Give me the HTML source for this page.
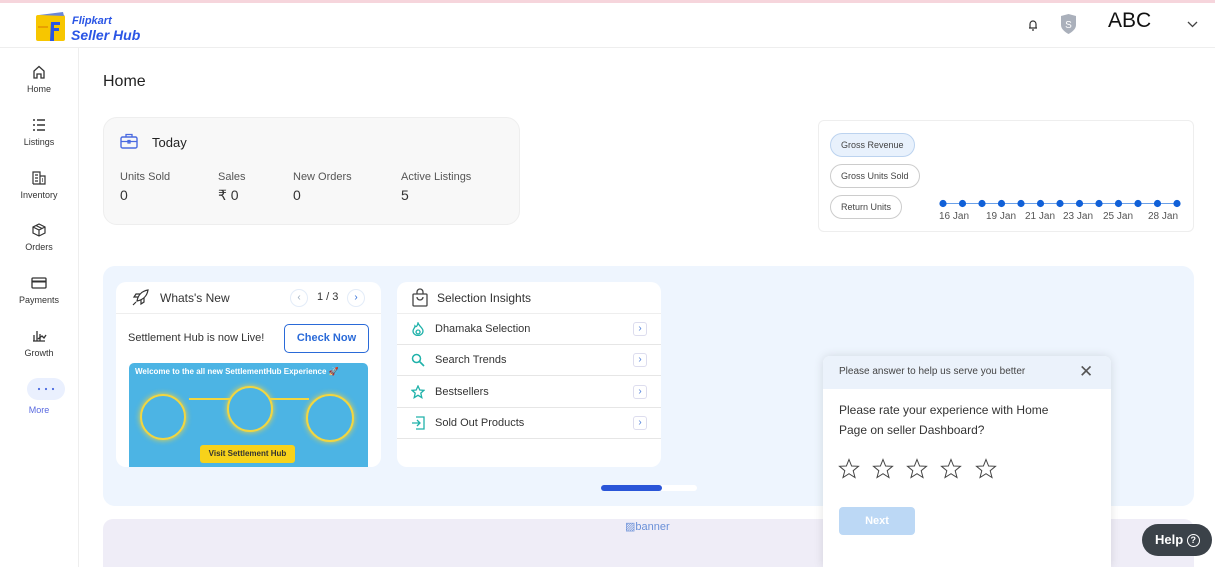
<!DOCTYPE html>
<html><head><meta charset="utf-8"><style>
*{box-sizing:border-box;margin:0;padding:0}
body{width:1215px;height:567px;overflow:hidden;background:#fff;font-family:"Liberation Sans",Arial,sans-serif;color:#333;position:relative}
.a{position:absolute}
.nav{position:absolute;left:0;width:78px;text-align:center;font-size:9px;color:#333}
.nav svg{display:block;margin:0 auto 5px}
.chip{position:absolute;left:830px;height:24px;border:1px solid #ccc;border-radius:12px;font-size:9px;color:#444;padding:0 10px;line-height:22px;background:#fff}
.row{position:absolute;left:397px;width:264px;height:31px;border-bottom:1px solid #e6e6e6;font-size:11px;color:#333}
.row span{position:absolute;left:38px;top:9px}
.row .arr{position:absolute;left:236px;top:8px;width:14px;height:14px;border:1px solid #dde;border-radius:3px;color:#4a7bd8;font-size:10px;line-height:12px;text-align:center}
.row svg{position:absolute;left:14px;top:8px}
.star{position:absolute;top:458px}
</style></head><body>
<div class="a" style="left:0;top:0;width:1215px;height:3px;background:#f6d5dc"></div>
<div class="a" style="left:0;top:47px;width:1215px;height:1px;background:#eee"></div>
<div class="a" style="left:78px;top:48px;width:1px;height:519px;background:#eee"></div>
<svg class="a" style="left:35px;top:10px" width="32" height="32" viewBox="0 0 32 32"><rect x="1" y="5" width="29" height="26" rx="2" fill="#f7c600"/><path d="M4 5 L28 2 L29 6 Z" fill="#6a86d8"/><path d="M16 12 h9 v3 h-6 v3 h5 v3 h-5 v10 h-4 z" fill="#2a55e5"/><path d="M3 17 h10" stroke="#e8a000" stroke-width="2"/></svg>
<div class="a" style="left:72px;top:15px;font-size:11px;font-style:italic;font-weight:bold;color:#2a55e5">Flipkart</div>
<div class="a" style="left:71px;top:27px;font-size:14px;font-style:italic;font-weight:bold;color:#2a55e5">Seller Hub</div>
<svg class="a" style="left:1027px;top:18px" width="12" height="14" viewBox="0 0 12 14"><path d="M3 10 V6 a3 3 0 0 1 6 0 V10 H10 H2 Z M5 12 h2" fill="none" stroke="#333" stroke-width="1.2"/></svg>
<svg class="a" style="left:1060px;top:14px" width="17" height="20" viewBox="0 0 17 20"><path d="M1 2 L8.5 0 L16 2 V11 C16 15 12 18 8.5 20 C5 18 1 15 1 11 Z" fill="#aab0bb"/><text x="8.5" y="14" font-size="10" fill="#fff" text-anchor="middle" font-family="Liberation Sans">S</text></svg>
<div class="a" style="left:1108px;top:9px;font-size:21px;color:#111">ABC</div>
<svg class="a" style="left:1187px;top:21px" width="11" height="7" viewBox="0 0 11 7"><path d="M1 1 L5.5 5.5 L10 1" fill="none" stroke="#444" stroke-width="1.3"/></svg>
<div class="nav" style="top:65px"><svg width="14" height="14" viewBox="0 0 14 14"><path d="M2 13 V6 L7 1.5 L12 6 V13 H9 V9 H5 V13 Z" fill="none" stroke="#333" stroke-width="1.3"/></svg>Home</div>
<div class="nav" style="top:118px"><svg width="14" height="14" viewBox="0 0 14 14"><path d="M1 2h2M1 7h2M1 12h2M5 2h8M5 7h8M5 12h8" stroke="#333" stroke-width="1.5"/></svg>Listings</div>
<div class="nav" style="top:171px"><svg width="14" height="14" viewBox="0 0 14 14"><path d="M1 13V1h7v12M8 5h5v8H1M3 4h3M3 7h3M3 10h3M10 8h1M10 10h1" fill="none" stroke="#333" stroke-width="1.2"/></svg>Inventory</div>
<div class="nav" style="top:223px"><svg width="14" height="14" viewBox="0 0 14 14"><path d="M7 1 L13 4 V10 L7 13 L1 10 V4 Z M1 4 L7 7 L13 4 M7 7 V13 M4 2.5 L10 5.5" fill="none" stroke="#333" stroke-width="1.2"/></svg>Orders</div>
<div class="nav" style="top:276px"><svg width="16" height="14" viewBox="0 0 16 14"><rect x="1" y="2" width="14" height="10" rx="1" fill="none" stroke="#333" stroke-width="1.3"/><path d="M1 5.5h14" stroke="#333" stroke-width="2"/></svg>Payments</div>
<div class="nav" style="top:329px"><svg width="16" height="14" viewBox="0 0 16 14"><path d="M3 12V6M6 12V2M9 12V5M2 12h12M7 10 L11 7 L13 9 L15 6" fill="none" stroke="#333" stroke-width="1.3"/></svg>Growth</div>
<div class="a" style="left:27px;top:378px;width:38px;height:22px;border-radius:11px;background:#eaf0fe"></div>
<svg class="a" style="left:37px;top:387px" width="18" height="4"><g fill="#4a6ae0"><circle cx="2" cy="2" r="1.1"/><circle cx="9" cy="2" r="1.1"/><circle cx="16" cy="2" r="1.1"/></g></svg>
<div class="nav" style="top:405px;color:#5a6ae0">More</div>
<div class="a" style="left:103px;top:73px;font-size:16px;color:#222">Home</div>
<div class="a" style="left:103px;top:117px;width:417px;height:108px;background:#f8f8f8;border:1px solid #eee;border-radius:14px"></div>
<svg class="a" style="left:120px;top:133px" width="18" height="16" viewBox="0 0 18 16"><rect x="1" y="4" width="16" height="11" rx="1.5" fill="none" stroke="#4a6ae0" stroke-width="1.4"/><path d="M6 4V1.5h6V4M1 8.5h16M8 7.5h2v2.5h-2z" fill="none" stroke="#4a6ae0" stroke-width="1.3"/></svg>
<div class="a" style="left:152px;top:135px;font-size:13px;color:#222">Today</div>
<div class="a" style="left:120px;top:171px;font-size:11px;color:#555">Units Sold</div>
<div class="a" style="left:218px;top:171px;font-size:11px;color:#555">Sales</div>
<div class="a" style="left:293px;top:171px;font-size:11px;color:#555">New Orders</div>
<div class="a" style="left:401px;top:171px;font-size:11px;color:#555">Active Listings</div>
<div class="a" style="left:120px;top:187px;font-size:14px;color:#333">0</div>
<div class="a" style="left:218px;top:187px;font-size:14px;color:#333">₹ 0</div>
<div class="a" style="left:293px;top:187px;font-size:14px;color:#333">0</div>
<div class="a" style="left:401px;top:187px;font-size:14px;color:#333">5</div>
<div class="a" style="left:818px;top:120px;width:376px;height:112px;border:1px solid #eee;border-radius:6px"></div>
<div class="chip" style="top:133px;background:#e8f1fc;border-color:#bcd3ef">Gross Revenue</div>
<div class="chip" style="top:164px">Gross Units Sold</div>
<div class="chip" style="top:195px">Return Units</div>
<div class="a" style="left:943px;top:203px;width:235px;height:1px;background:#6aa0e8"></div>
<svg class="a" style="left:938px;top:198px" width="245" height="11"><g fill="#1060d8">
<circle cx="5" cy="5.5" r="3.6"/><circle cx="24.5" cy="5.5" r="3.6"/><circle cx="44" cy="5.5" r="3.6"/><circle cx="63.5" cy="5.5" r="3.6"/><circle cx="83" cy="5.5" r="3.6"/><circle cx="102.5" cy="5.5" r="3.6"/><circle cx="122" cy="5.5" r="3.6"/><circle cx="141.5" cy="5.5" r="3.6"/><circle cx="161" cy="5.5" r="3.6"/><circle cx="180.5" cy="5.5" r="3.6"/><circle cx="200" cy="5.5" r="3.6"/><circle cx="219.5" cy="5.5" r="3.6"/><circle cx="239" cy="5.5" r="3.6"/></g></svg>
<div class="a" style="left:939px;top:211px;font-size:10px;color:#555">16 Jan</div>
<div class="a" style="left:986px;top:211px;font-size:10px;color:#555">19 Jan</div>
<div class="a" style="left:1025px;top:211px;font-size:10px;color:#555">21 Jan</div>
<div class="a" style="left:1063px;top:211px;font-size:10px;color:#555">23 Jan</div>
<div class="a" style="left:1103px;top:211px;font-size:10px;color:#555">25 Jan</div>
<div class="a" style="left:1148px;top:211px;font-size:10px;color:#555">28 Jan</div>
<div class="a" style="left:103px;top:266px;width:1091px;height:240px;background:#eef5fe;border-radius:12px"></div>
<div class="a" style="left:116px;top:282px;width:265px;height:185px;background:#fff;border-radius:10px;overflow:hidden">
 <div class="a" style="left:0;top:31px;width:265px;height:1px;background:#eee"></div>
</div>
<svg class="a" style="left:132px;top:289px" width="18" height="17" viewBox="0 0 18 17"><path d="M5 12 C6 6 10 2 16 1 C15 7 11 11 5 12 Z M6 8 L2 8 L4 5 L8 5 M9 11 L9 15 L12 13 L12 9 M4 13 L1 16" fill="none" stroke="#333" stroke-width="1.2"/></svg>
<div class="a" style="left:160px;top:291px;font-size:12px;color:#333">Whats's New</div>
<div class="a" style="left:290px;top:289px;width:18px;height:18px;border:1px solid #e3ecf8;border-radius:9px;text-align:center;font-size:10px;line-height:16px;color:#9ab">‹</div>
<div class="a" style="left:317px;top:291px;font-size:11px;color:#333">1 / 3</div>
<div class="a" style="left:347px;top:289px;width:18px;height:18px;border:1px solid #e3ecf8;border-radius:9px;text-align:center;font-size:10px;line-height:16px;color:#2a6ad8">›</div>
<div class="a" style="left:128px;top:332px;font-size:11px;color:#333">Settlement Hub is now Live!</div>
<div class="a" style="left:284px;top:324px;width:85px;height:29px;border:1.5px solid #2a6ad8;border-radius:5px;color:#2a6ad8;font-size:11px;font-weight:bold;text-align:center;line-height:26px">Check Now</div>
<div class="a" style="left:129px;top:363px;width:239px;height:104px;background:#4cb4e4;border-radius:5px 5px 0 0;overflow:hidden">
 <div class="a" style="left:6px;top:4px;font-size:8px;font-weight:bold;color:#fff;white-space:nowrap">Welcome to the all new SettlementHub Experience 🚀</div>
 <div class="a" style="left:60px;top:35px;width:120px;height:2px;background:#f2d640"></div>
 <div class="a" style="left:11px;top:31px;width:46px;height:46px;border:2px solid #f2d640;border-radius:50%;box-shadow:0 0 6px #f2d640"></div>
 <div class="a" style="left:98px;top:23px;width:46px;height:46px;border:2px solid #f2d640;border-radius:50%;background:#4cb4e4;box-shadow:0 0 6px #f2d640"></div>
 <div class="a" style="left:177px;top:31px;width:48px;height:48px;border:2px solid #f2d640;border-radius:50%;background:#4cb4e4;box-shadow:0 0 6px #f2d640"></div>
 <div class="a" style="left:71px;top:82px;width:95px;height:18px;background:#f7d21a;border-radius:3px;font-size:8px;font-weight:bold;color:#333;text-align:center;line-height:18px">Visit Settlement Hub</div>
</div>
<div class="a" style="left:397px;top:282px;width:264px;height:185px;background:#fff;border-radius:10px"></div>
<svg class="a" style="left:411px;top:288px" width="18" height="19" viewBox="0 0 18 19"><rect x="2" y="6" width="14" height="12" rx="1" fill="none" stroke="#444" stroke-width="1.3"/><path d="M6 6 V4 a3 3 0 0 1 6 0 V6 M6 9 a3 3 0 0 0 6 0" fill="none" stroke="#444" stroke-width="1.3"/></svg>
<div class="a" style="left:437px;top:291px;font-size:12px;color:#333">Selection Insights</div>
<div class="a" style="left:397px;top:313px;width:264px;height:1px;background:#eee"></div>
<div class="row" style="top:314px"><svg width="14" height="14" viewBox="0 0 14 14"><path d="M7 1 C8 4 12 6 12 9 a5 4.5 0 0 1 -10 0 C2 7 4 6 4 4 C5 5 6 5 7 1Z M7 8 a2 2 0 1 0 0.1 0" fill="none" stroke="#20b2aa" stroke-width="1.3"/></svg><span>Dhamaka Selection</span><div class="arr">›</div></div>
<div class="row" style="top:345px"><svg width="14" height="14" viewBox="0 0 14 14"><circle cx="5.5" cy="5.5" r="4" fill="none" stroke="#20b2aa" stroke-width="1.5"/><path d="M8.5 8.5 L13 13" stroke="#20b2aa" stroke-width="1.6"/></svg><span>Search Trends</span><div class="arr">›</div></div>
<div class="row" style="top:377px"><svg width="14" height="14" viewBox="0 0 14 14"><path d="M7 1 L8.8 5 L13 5.3 L9.8 8.1 L10.8 12.6 L7 10.3 L3.2 12.6 L4.2 8.1 L1 5.3 L5.2 5 Z" fill="none" stroke="#20b2aa" stroke-width="1.3"/></svg><span>Bestsellers</span><div class="arr">›</div></div>
<div class="row" style="top:408px"><svg width="14" height="14" viewBox="0 0 14 14"><path d="M5 1 H13 V13 H5 M1 7 H9 M6 4 L9 7 L6 10" fill="none" stroke="#20b2aa" stroke-width="1.3"/></svg><span>Sold Out Products</span><div class="arr">›</div></div>
<div class="a" style="left:601px;top:485px;width:96px;height:6px;border-radius:3px;background:#fff"></div>
<div class="a" style="left:601px;top:485px;width:61px;height:6px;border-radius:3px;background:#2a55d8"></div>
<div class="a" style="left:103px;top:519px;width:1091px;height:48px;background:#efedf7;border-radius:10px 10px 0 0"></div>
<div class="a" style="left:625px;top:520px;font-size:11px;color:#6a90d8">▨banner</div>
<div class="a" style="left:823px;top:356px;width:288px;height:211px;background:#fff;border-radius:7px 7px 0 0;box-shadow:0 0 10px rgba(0,0,0,.12);overflow:hidden">
 <div style="height:33px;background:#ebf2fb"></div>
</div>
<div class="a" style="left:839px;top:366px;font-size:10px;color:#444">Please answer to help us serve you better</div>
<div class="a" style="left:1079px;top:362px;font-size:17px;color:#555">✕</div>
<div class="a" style="left:839px;top:400px;font-size:12px;color:#333;line-height:20px;width:240px">Please rate your experience with Home Page on seller Dashboard?</div>
<svg class="star" style="left:838px" width="22" height="22" viewBox="0 0 22 22"><path d="M11 1.5 L13.6 8 L20.5 8.3 L15.2 12.7 L17 19.5 L11 15.7 L5 19.5 L6.8 12.7 L1.5 8.3 L8.4 8 Z" fill="none" stroke="#444" stroke-width="1"/></svg>
<svg class="star" style="left:872px" width="22" height="22" viewBox="0 0 22 22"><path d="M11 1.5 L13.6 8 L20.5 8.3 L15.2 12.7 L17 19.5 L11 15.7 L5 19.5 L6.8 12.7 L1.5 8.3 L8.4 8 Z" fill="none" stroke="#444" stroke-width="1"/></svg>
<svg class="star" style="left:906px" width="22" height="22" viewBox="0 0 22 22"><path d="M11 1.5 L13.6 8 L20.5 8.3 L15.2 12.7 L17 19.5 L11 15.7 L5 19.5 L6.8 12.7 L1.5 8.3 L8.4 8 Z" fill="none" stroke="#444" stroke-width="1"/></svg>
<svg class="star" style="left:940px" width="22" height="22" viewBox="0 0 22 22"><path d="M11 1.5 L13.6 8 L20.5 8.3 L15.2 12.7 L17 19.5 L11 15.7 L5 19.5 L6.8 12.7 L1.5 8.3 L8.4 8 Z" fill="none" stroke="#444" stroke-width="1"/></svg>
<svg class="star" style="left:975px" width="22" height="22" viewBox="0 0 22 22"><path d="M11 1.5 L13.6 8 L20.5 8.3 L15.2 12.7 L17 19.5 L11 15.7 L5 19.5 L6.8 12.7 L1.5 8.3 L8.4 8 Z" fill="none" stroke="#444" stroke-width="1"/></svg>
<div class="a" style="left:839px;top:507px;width:76px;height:28px;background:#bcd8f5;border-radius:4px;color:#fff;font-size:11px;font-weight:bold;text-align:center;line-height:28px">Next</div>
<div class="a" style="left:1142px;top:524px;width:70px;height:32px;background:#3b4249;border-radius:16px;color:#fff;font-size:13px;font-weight:bold;line-height:32px;padding-left:13px">Help <span style="display:inline-block;width:13px;height:13px;border:1.3px solid #fff;border-radius:50%;font-size:9px;line-height:11px;text-align:center;vertical-align:1px">?</span></div>
</body></html>
